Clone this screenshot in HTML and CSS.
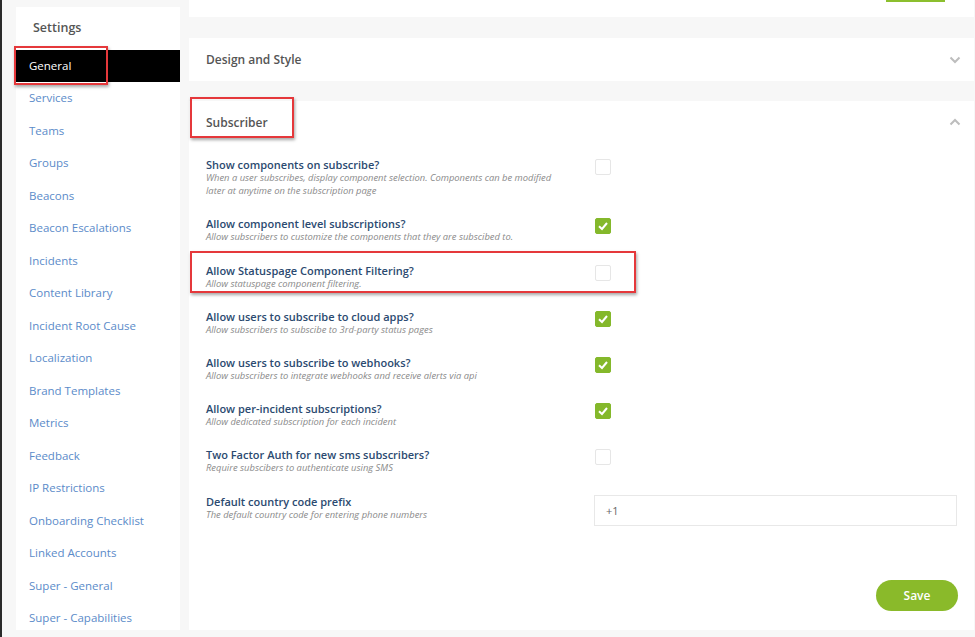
FILE: index.html
```html
<!DOCTYPE html>
<html>
<head>
<meta charset="utf-8">
<link rel="stylesheet" href="styles.css">
</head>
<body>
<div class="app">
  <aside class="sidebar">
    <div class="sidebar-title">Settings</div>
    <nav class="nav">
      <div class="nav-item active">General<span class="mark mark-general"></span></div>
      <div class="nav-item">Services</div>
      <div class="nav-item">Teams</div>
      <div class="nav-item">Groups</div>
      <div class="nav-item">Beacons</div>
      <div class="nav-item">Beacon Escalations</div>
      <div class="nav-item">Incidents</div>
      <div class="nav-item">Content Library</div>
      <div class="nav-item">Incident Root Cause</div>
      <div class="nav-item">Localization</div>
      <div class="nav-item">Brand Templates</div>
      <div class="nav-item">Metrics</div>
      <div class="nav-item">Feedback</div>
      <div class="nav-item">IP Restrictions</div>
      <div class="nav-item">Onboarding Checklist</div>
      <div class="nav-item">Linked Accounts</div>
      <div class="nav-item">Super - General</div>
      <div class="nav-item">Super - Capabilities</div>
    </nav>
  </aside>
  <main class="main">
    <section class="card card-top"><span class="peek-btn"></span></section>
    <section class="card card-collapsed">
      <div class="card-head">
        <span class="card-title">Design and Style</span>
        <svg class="chev" width="12" height="8" viewBox="0 0 12 8"><path d="M1.5 1.5 L6 6 L10.5 1.5" fill="none" stroke="#bdbdbd" stroke-width="2"/></svg>
      </div>
    </section>
    <section class="card card-open">
      <div class="card-head">
        <span class="card-title">Subscriber<span class="mark mark-sub"></span></span>
        <svg class="chev" width="12" height="8" viewBox="0 0 12 8"><path d="M1.5 6.5 L6 2 L10.5 6.5" fill="none" stroke="#bdbdbd" stroke-width="2"/></svg>
      </div>
      <div class="rows">
        <div class="row">
          <div class="label">
            <div class="row-title">Show components on subscribe?</div>
            <div class="row-desc">When a user subscribes, display component selection. Components can be modified later at anytime on the subscription page</div>
          </div>
          <span class="box"></span>
        </div>
        <div class="row">
          <div class="label">
            <div class="row-title">Allow component level subscriptions?</div>
            <div class="row-desc">Allow subscribers to customize the components that they are subscibed to.</div>
          </div>
          <span class="box on"><svg width="16" height="16" viewBox="0 0 16 16"><path d="M4 8.2 L7 11 L12 5" fill="none" stroke="#fff" stroke-width="2"/></svg></span>
        </div>
        <div class="row">
          <div class="label">
            <div class="row-title">Allow Statuspage Component Filtering?</div>
            <div class="row-desc">Allow statuspage component filtering.</div>
          </div>
          <span class="box"></span>
          <span class="mark mark-row"></span>
        </div>
        <div class="row">
          <div class="label">
            <div class="row-title">Allow users to subscribe to cloud apps?</div>
            <div class="row-desc">Allow subscribers to subscibe to 3rd-party status pages</div>
          </div>
          <span class="box on"><svg width="16" height="16" viewBox="0 0 16 16"><path d="M4 8.2 L7 11 L12 5" fill="none" stroke="#fff" stroke-width="2"/></svg></span>
        </div>
        <div class="row">
          <div class="label">
            <div class="row-title">Allow users to subscribe to webhooks?</div>
            <div class="row-desc">Allow subscribers to integrate webhooks and receive alerts via api</div>
          </div>
          <span class="box on"><svg width="16" height="16" viewBox="0 0 16 16"><path d="M4 8.2 L7 11 L12 5" fill="none" stroke="#fff" stroke-width="2"/></svg></span>
        </div>
        <div class="row">
          <div class="label">
            <div class="row-title">Allow per-incident subscriptions?</div>
            <div class="row-desc">Allow dedicated subscription for each incident</div>
          </div>
          <span class="box on"><svg width="16" height="16" viewBox="0 0 16 16"><path d="M4 8.2 L7 11 L12 5" fill="none" stroke="#fff" stroke-width="2"/></svg></span>
        </div>
        <div class="row">
          <div class="label">
            <div class="row-title">Two Factor Auth for new sms subscribers?</div>
            <div class="row-desc">Require subscibers to authenticate using SMS</div>
          </div>
          <span class="box"></span>
        </div>
        <div class="row">
          <div class="label">
            <div class="row-title">Default country code prefix</div>
            <div class="row-desc">The default country code for entering phone numbers</div>
          </div>
          <div class="input">+1</div>
        </div>
      </div>
      <div class="actions"><button class="save">Save</button></div>
    </section>
  </main>
</div>
</body>
</html>
```

FILE: styles.css
```css
* { box-sizing: border-box; }
html, body { margin: 0; padding: 0; }
body {
  font-family: "Open Sans", "Liberation Sans", sans-serif;
  background: #f7f7f7;
  width: 975px;
  height: 637px;
  overflow: hidden;
}
.app {
  display: flex;
  height: 637px;
  border-left: 2px solid #2a2a2a;
  background: #f7f7f7;
}
.sidebar {
  width: 164px;
  margin: 7px 0 7px 14px;
  background: #fff;
}
.sidebar-title {
  height: 43px;
  padding: 12px 0 0 17px;
  font-size: 12.5px;
  font-weight: 600;
  color: #555;
}
.nav-item {
  position: relative;
  height: 32.5px;
  line-height: 32.5px;
  padding-left: 13px;
  font-size: 11.5px;
  color: #5b8bc9;
  white-space: nowrap;
}
.nav-item.active {
  background: #000;
  color: #fff;
  height: 32px;
  line-height: 32px;
}
.mark {
  position: absolute;
  border: 2px solid #e5383b;
  box-shadow: 1px 2px 3px rgba(0,0,0,0.35);
  pointer-events: none;
}
.mark-general { left: -2px; top: -4px; width: 94px; height: 39px; }
.main {
  flex: 1;
  margin-left: 9px;
  margin-right: 1px;
  display: flex;
  flex-direction: column;
  gap: 21px;
}
.card { background: #fff; position: relative; }
.card-top { height: 17px; }
.peek-btn {
  position: absolute;
  left: 697px;
  top: 0;
  width: 59px;
  height: 1.5px;
  background: #8cbf2e;
}
.card-collapsed { height: 43px; margin-bottom: -1px; }
.card-head {
  height: 43px;
  display: flex;
  align-items: center;
  justify-content: space-between;
  padding: 0 13px 0 17px;
}
.card-title {
  position: relative;
  font-size: 12px;
  font-weight: 600;
  color: #555;
}
.mark-sub { left: -16px; top: -17px; width: 104px; height: 41px; }
.chev { display: block; }
.card-open { flex: 1; margin-bottom: 7px; }
.card-open .card-head { height: 42px; }
.rows { padding: 15px 17px 0 17px; }
.row {
  position: relative;
  display: flex;
  align-items: flex-start;
  padding-bottom: 19.9px;
}
.label { width: 388px; }
.row-title {
  font-size: 11px;
  line-height: 13px;
  font-weight: 600;
  color: #2b4a70;
  white-space: nowrap;
}
.row-desc {
  font-size: 9.4px;
  line-height: 13.3px;
  font-style: italic;
  color: #8a8a8a;
  padding-right: 26px;
}
.box {
  display: block;
  width: 16px;
  height: 16px;
  margin-left: 1px;
  margin-top: 1px;
  border: 1px solid #e6e6e6;
  border-radius: 2px;
  background: #fff;
}
.box.on {
  background: #84b82b;
  border-color: #84b82b;
  position: relative;
}
.box.on svg { position: absolute; left: -1px; top: -1px; }
.mark-row { left: -16px; top: -13px; width: 446px; height: 42px; }
.input {
  width: 363px;
  height: 31px;
  border: 1px solid #e8e8e8;
  padding-left: 11px;
  line-height: 29px;
  font-size: 11px;
  color: #666;
}
.actions {
  display: flex;
  justify-content: flex-end;
  padding: 34px 16px 0 0;
}
.save {
  width: 82px;
  height: 31px;
  border: none;
  border-radius: 16px;
  background: #8aba2a;
  color: #fff;
  font-family: "Open Sans", "Liberation Sans", sans-serif;
  font-size: 12px;
  font-weight: 600;
}
```
